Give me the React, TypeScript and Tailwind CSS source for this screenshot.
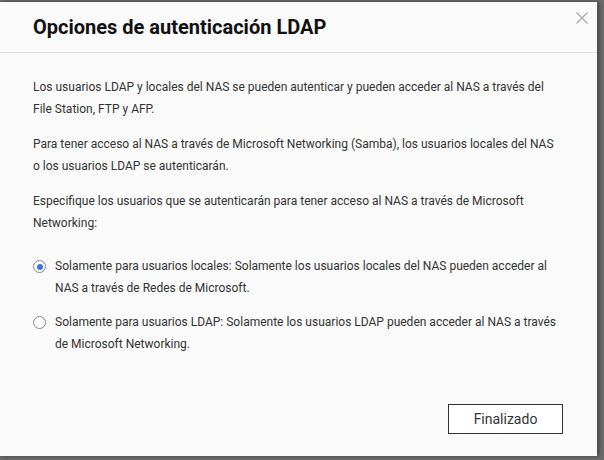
export default function App() {
  return (
    <div className="w-[604px] h-[460px] bg-[#6b6b6b] pt-[2px] pr-[7px] pb-[4px] font-['Roboto',sans-serif]">
      <div className="relative flex h-full flex-col bg-[#fafafa] shadow-[2px_0_4px_rgba(0,0,0,0.4)]">
        {/* Header */}
        <div className="flex h-[51px] items-center border-b border-[#dedede] pl-[33px]">
          <h1 className="text-[20px] font-bold leading-none text-[#111]">
            Opciones de autenticación LDAP
          </h1>
        </div>
        <button className="absolute right-[7px] top-[8px] text-[#aaa]">
          <svg width="16" height="16" viewBox="0 0 16 16" fill="none" stroke="currentColor" strokeWidth="1.2">
            <path d="M2.5 2.5 L13.5 13.5 M13.5 2.5 L2.5 13.5" />
          </svg>
        </button>

        {/* Body */}
        <div className="flex-1 whitespace-nowrap px-[33px] pt-[23px] text-[12px] leading-[22px] text-[#333]">
          <p>
            Los usuarios LDAP y locales del NAS se pueden autenticar y pueden acceder al NAS a través del
            <br />
            File Station, FTP y AFP.
          </p>
          <p className="mt-[13px]">
            Para tener acceso al NAS a través de Microsoft Networking (Samba), los usuarios locales del NAS
            <br />
            o los usuarios LDAP se autenticarán.
          </p>
          <p className="mt-[13px]">
            Especifique los usuarios que se autenticarán para tener acceso al NAS a través de Microsoft
            <br />
            Networking:
          </p>

          <div className="mt-[21px] flex flex-col gap-[12px]">
            <label className="flex items-start gap-[9px]">
              <span className="mt-[5px] flex h-[13px] w-[13px] shrink-0 items-center justify-center rounded-full border border-[#888] bg-white">
                <span className="h-[6px] w-[6px] rounded-full bg-[#3b73e0]" />
              </span>
              <span>
                Solamente para usuarios locales: Solamente los usuarios locales del NAS pueden acceder al
                <br />
                NAS a través de Redes de Microsoft.
              </span>
            </label>
            <label className="flex items-start gap-[9px]">
              <span className="mt-[5px] h-[13px] w-[13px] shrink-0 rounded-full border border-[#888] bg-white" />
              <span>
                Solamente para usuarios LDAP: Solamente los usuarios LDAP pueden acceder al NAS a través
                <br />
                de Microsoft Networking.
              </span>
            </label>
          </div>
        </div>

        {/* Footer */}
        <div className="flex justify-end pb-[22px] pr-[34px]">
          <button className="h-[30px] w-[115px] border border-[#333] bg-white text-[14px] text-[#333]">
            Finalizado
          </button>
        </div>
      </div>
    </div>
  );
}
